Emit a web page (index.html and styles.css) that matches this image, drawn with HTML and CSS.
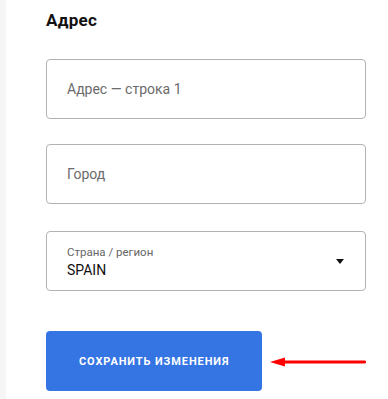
FILE: index.html
```html
<!DOCTYPE html>
<html lang="ru">
<head>
    <meta charset="UTF-8">
    <meta name="viewport" content="width=device-width, initial-scale=1.0">
    <title>Адрес</title>
    <link rel="stylesheet" href="styles.css">
</head>
<body>
    <div class="side-strip"></div>
    <main class="content">
        <h2>Адрес</h2>

        <input class="field field-first" type="text" placeholder="Адрес — строка 1">
        <input class="field field-city" type="text" placeholder="Город">

        <div class="field select-field">
            <div class="select-text">
                <span class="select-label">Страна / регион</span>
                <span class="select-value">SPAIN</span>
            </div>
            <span class="caret"></span>
        </div>

        <div class="actions">
            <button class="btn-save">Сохранить изменения</button>
            <svg class="pointer" width="96" height="12" viewBox="0 0 96 12">
                <line x1="12" y1="6" x2="95" y2="6" stroke="#ff0000" stroke-width="3" stroke-linecap="round"/>
                <polygon points="0,6 15,1.5 15,10.5" fill="#ff0000"/>
            </svg>
        </div>
    </main>
</body>
</html>
```

FILE: styles.css
```css
body {
    font-family: 'Roboto', 'Liberation Sans', sans-serif;
    margin: 0;
    padding: 0;
    background: white;
    display: flex;
    min-height: 100vh;
}
.side-strip {
    width: 6px;
    background: #f6f6f6;
    flex-shrink: 0;
}
.content {
    width: 320px;
    padding: 9px 0 0 40px;
}
h2 {
    font-size: 17px;
    font-weight: 700;
    letter-spacing: 0.3px;
    color: #111;
    margin: 0;
    line-height: 22px;
}
.field {
    display: block;
    box-sizing: border-box;
    width: 320px;
    height: 60px;
    border: 1px solid #b3b3b3;
    border-radius: 4px;
    padding: 0 20px;
    font-family: inherit;
    font-size: 14px;
    color: #222;
    background: white;
    outline: none;
}
.field::placeholder {
    color: #6b6b6b;
}
.field-first {
    margin-top: 28px;
}
.field-city {
    margin-top: 25px;
}
.select-field {
    margin-top: 27px;
    display: flex;
    align-items: center;
    justify-content: space-between;
}
.select-text {
    display: flex;
    flex-direction: column;
    padding-top: 2px;
}
.select-label {
    font-size: 11.5px;
    color: #666;
    line-height: 16px;
}
.select-value {
    font-size: 14px;
    color: #111;
    line-height: 20px;
}
.caret {
    width: 0;
    height: 0;
    border-left: 4.5px solid transparent;
    border-right: 4.5px solid transparent;
    border-top: 5px solid #111;
    margin-right: 1px;
}
.actions {
    display: flex;
    align-items: center;
    gap: 8px;
    margin-top: 40px;
}
.btn-save {
    width: 217px;
    height: 60px;
    border: none;
    border-radius: 4px;
    background: #3574e3;
    color: white;
    font-family: inherit;
    font-size: 11px;
    font-weight: 700;
    letter-spacing: 0.9px;
    text-transform: uppercase;
    cursor: pointer;
}
.pointer {
    display: block;
    margin-top: 2px;
}
```
